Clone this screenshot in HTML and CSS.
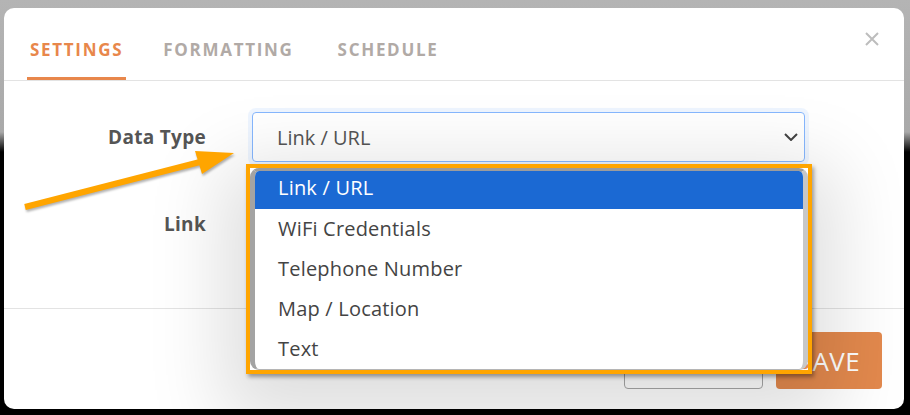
FILE: index.html
```html
<!DOCTYPE html>
<html lang="en">
<head>
<meta charset="utf-8">
<title>Settings</title>
<link rel="stylesheet" href="styles.css">
</head>
<body>
<div class="modal">
  <div class="modal-header">
    <nav class="tabs">
      <a class="tab active">Settings</a>
      <a class="tab">Formatting</a>
      <a class="tab tab-schedule">Schedule</a>
    </nav>
    <button class="close" aria-label="Close">
      <svg width="14" height="14" viewBox="0 0 14 14"><path d="M1 1L13 13M13 1L1 13" stroke="#bdbdbd" stroke-width="2" fill="none"/></svg>
    </button>
  </div>
  <div class="modal-body">
    <div class="form-row">
      <label class="form-label">Data Type</label>
      <div class="select-wrap">
        <div class="select">
          <span>Link / URL</span>
          <svg width="14" height="8" viewBox="0 0 14 8"><path d="M1 1L7 7L13 1" stroke="#444" stroke-width="2" fill="none"/></svg>
        </div>
        <div class="highlight">
          <ul class="popup">
            <li class="option selected">Link / URL</li>
            <li class="option">WiFi Credentials</li>
            <li class="option">Telephone Number</li>
            <li class="option">Map / Location</li>
            <li class="option">Text</li>
          </ul>
        </div>
      </div>
    </div>
    <div class="form-row">
      <label class="form-label">Link</label>
      <div class="input"></div>
    </div>
  </div>
  <div class="modal-footer">
    <button class="btn btn-cancel">Cancel</button>
    <button class="btn btn-save">Save</button>
  </div>
</div>
<svg class="annotation-arrow" width="910" height="415" viewBox="0 0 910 415">
  <line x1="25" y1="207" x2="200" y2="162" stroke="#ffa500" stroke-width="6"/>
  <polygon points="195,151 234,153 202,174" fill="#ffa500"/>
</svg>
</body>
</html>
```
FILE: styles.css
```css
html, body {
  margin: 0;
}
body {
  position: relative;
  height: 415px;
  box-sizing: border-box;
  padding: 8px 6px 6px 4px;
  overflow: hidden;
  background: linear-gradient(to bottom, #b4b4b4 0, #a9a9a9 132px, #000 152px);
  font-family: "Open Sans", "Noto Sans", sans-serif;
}
.modal {
  position: relative;
  height: 401px;
  background: #fff;
  border-radius: 10px;
  display: flex;
  flex-direction: column;
}
.modal-header {
  display: flex;
  height: 73px;
  box-sizing: border-box;
  padding: 0 25px 0 23px;
  border-bottom: 1px solid #e3e3e3;
}
.tabs {
  display: flex;
  gap: 34px;
}
.tab {
  padding: 31px 3px 16px;
  line-height: 22px;
  font-size: 17px;
  font-weight: 700;
  letter-spacing: 1.7px;
  text-transform: uppercase;
  color: #b1aaa6;
  border-bottom: 3px solid transparent;
}
.tab.active {
  color: #e8874b;
  border-bottom-color: #e8874b;
}
.tab-schedule {
  margin-left: 4px;
}
.close {
  margin-left: auto;
  margin-top: 24px;
  align-self: flex-start;
  background: none;
  border: 0;
  padding: 0;
  width: 14px;
  height: 14px;
  display: block;
}
.close svg {
  display: block;
}
.modal-body {
  height: 227px;
  box-sizing: border-box;
  padding-top: 31px;
}
.form-row {
  display: grid;
  grid-template-columns: 202px 553px;
  column-gap: 46px;
  align-items: center;
  margin-bottom: 37px;
}
.form-label {
  text-align: right;
  font-size: 19px;
  font-weight: 700;
  color: #555;
  letter-spacing: 0.3px;
}
.select-wrap {
  position: relative;
}
.select {
  height: 50px;
  box-sizing: border-box;
  border: 1px solid #86b7fe;
  border-radius: 4px;
  box-shadow: 0 0 0 4px rgba(13, 110, 253, 0.07);
  display: flex;
  align-items: center;
  justify-content: space-between;
  padding: 0 6px 0 24px;
  font-size: 20px;
  color: #555;
}
.select svg {
  display: block;
}
.highlight {
  position: absolute;
  left: -6px;
  top: 52px;
  width: 566px;
  height: 210px;
  box-sizing: border-box;
  border: 4px solid #ffa500;
  z-index: 5;
  box-shadow: 2px 3px 4px rgba(0, 0, 0, 0.35), 0 24px 70px 24px rgba(0, 0, 0, 0.13);
}
.popup {
  margin: 0;
  padding: 0;
  list-style: none;
  height: 100%;
  box-sizing: border-box;
  border-style: solid;
  border-width: 3px 5px 1px 5px;
  border-color: #9c9c9c #c7c7c7 #b5b5b5 #a3a3a3;
  border-radius: 9px;
  background: #fff;
  overflow: hidden;
}
.option {
  height: 40px;
  line-height: 40px;
  padding-left: 23px;
  font-size: 20px;
  color: #444;
  letter-spacing: 0.2px;
}
.option.selected {
  height: 38px;
  line-height: 34px;
  background: #1b69d3;
  color: #fff;
}
.input {
  height: 50px;
  box-sizing: border-box;
  border: 1px solid #ced4da;
  border-radius: 4px;
}
.modal-footer {
  border-top: 1px solid #e3e3e3;
  padding: 23px 22px 20px;
  display: flex;
  justify-content: flex-end;
  gap: 13px;
}
.btn {
  height: 57px;
  border-radius: 4px;
  font-family: inherit;
  text-transform: uppercase;
  letter-spacing: 1px;
}
.btn-cancel {
  width: 139px;
  background: #fff;
  border: 1px solid #a7a7a7;
  color: #888;
  font-size: 20px;
}
.btn-save {
  width: 106px;
  padding: 0;
  background: #e3894d;
  border: 0;
  color: #fff;
  font-size: 26px;
  letter-spacing: 0.5px;
}
.annotation-arrow {
  position: absolute;
  left: 0;
  top: 0;
  z-index: 10;
  pointer-events: none;
  filter: drop-shadow(1px 2px 1px rgba(0, 0, 0, 0.3));
}
```
